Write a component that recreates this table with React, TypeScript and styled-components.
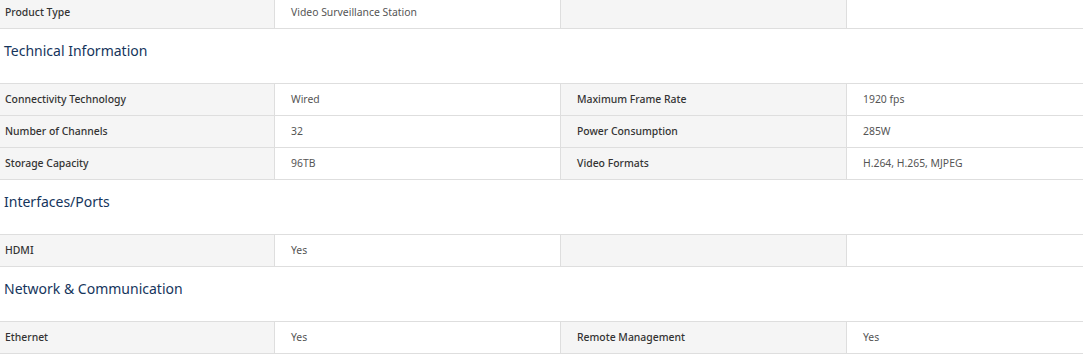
import styled, { createGlobalStyle } from 'styled-components';

type Spec = [string, string];

const sections: { title?: string; rows: Spec[][] }[] = [
  { rows: [[['Product Type', 'Video Surveillance Station'], ['', '']]] },
  {
    title: 'Technical Information',
    rows: [
      [['Connectivity Technology', 'Wired'], ['Maximum Frame Rate', '1920 fps']],
      [['Number of Channels', '32'], ['Power Consumption', '285W']],
      [['Storage Capacity', '96TB'], ['Video Formats', 'H.264, H.265, MJPEG']],
    ],
  },
  { title: 'Interfaces/Ports', rows: [[['HDMI', 'Yes'], ['', '']]] },
  {
    title: 'Network & Communication',
    rows: [[['Ethernet', 'Yes'], ['Remote Management', 'Yes']]],
  },
];

export default function App() {
  return (
    <>
      <GlobalStyle />
      <Page>
        {sections.map((section, i) => (
          <Section key={i}>
            {section.title && <SectionTitle>{section.title}</SectionTitle>}
            <SpecTable>
              {section.rows.map((row, r) => (
                <SpecRow key={r}>
                  {row.map(([label, value], c) => (
                    <SpecPair key={c}>
                      <Cell $label>{label}</Cell>
                      <Cell>{value}</Cell>
                    </SpecPair>
                  ))}
                </SpecRow>
              ))}
            </SpecTable>
          </Section>
        ))}
      </Page>
    </>
  );
}

const GlobalStyle = createGlobalStyle`
  html, body {
    margin: 0;
    padding: 0;
    background: #ffffff;
    overflow: hidden;
  }
  body {
    font-family: "Noto Sans", Lato, Arial, sans-serif;
  }
`;

const Page = styled.div`
  width: 1144px;
  margin: -4px 0 0 -11px;
`;

const Section = styled.section`
  display: flex;
  flex-direction: column;
`;

const SectionTitle = styled.h3`
  margin: 0;
  padding: 12px 0 22px 15px;
  font-size: 14px;
  line-height: 20px;
  font-weight: 400;
  color: #15355c;
`;

const SpecTable = styled.div`
  border-top: 1px solid #dedede;
`;

const SpecRow = styled.div`
  display: grid;
  grid-template-columns: 1fr 1fr;
  border-bottom: 1px solid #dedede;
`;

const SpecPair = styled.div`
  display: grid;
  grid-template-columns: 286px 286px;
`;

const Cell = styled.div<{ $label?: boolean }>`
  height: 30px;
  padding: 0 0 1px 16px;
  display: flex;
  align-items: center;
  border-right: 1px solid #dedede;
  font-size: 10.4px;
  background: ${p => (p.$label ? '#f5f5f5' : '#ffffff')};
  color: ${p => (p.$label ? '#333333' : '#555555')};
  font-weight: ${p => (p.$label ? 500 : 400)};
`;
